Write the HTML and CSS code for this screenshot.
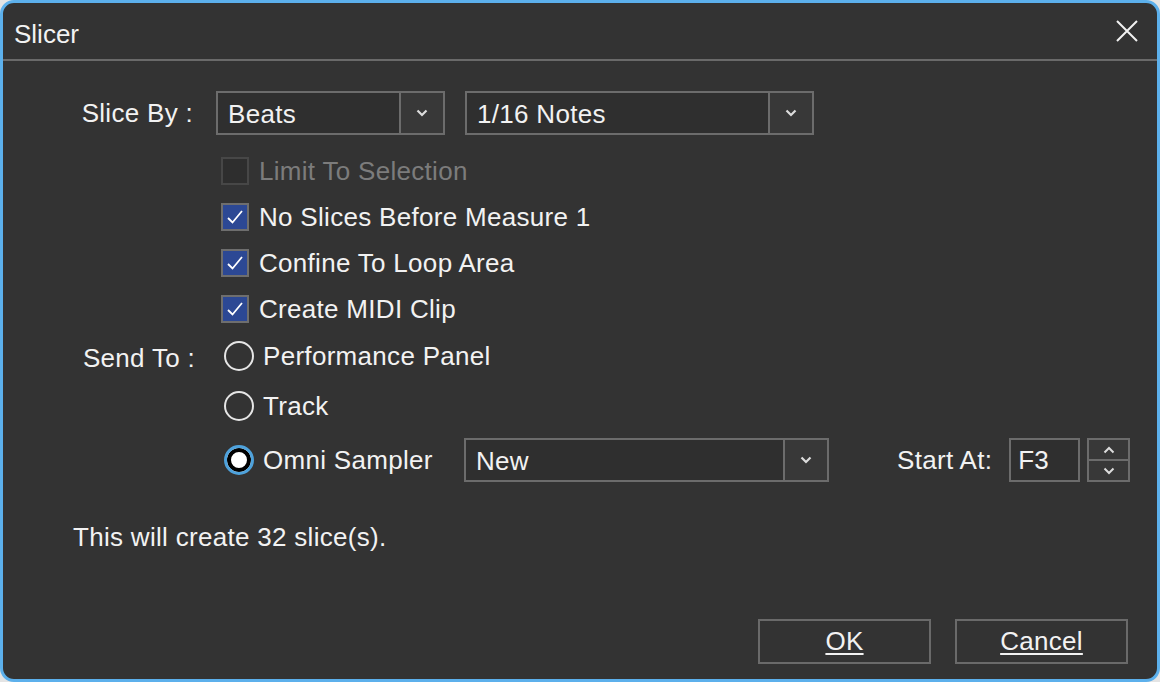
FILE: index.html
```html
<!DOCTYPE html>
<html lang="en">
<head>
    <meta charset="UTF-8">
    <title>Slicer</title>
    <link rel="stylesheet" href="styles.css">
</head>
<body>
    <div class="dialog">
        <header class="titlebar">
            <span class="title">Slicer</span>
            <button class="close" aria-label="Close">
                <svg width="24" height="24" viewBox="0 0 24 24"><path d="M2 2 L22 22 M22 2 L2 22" stroke="#f2f2f2" stroke-width="2" fill="none"/></svg>
            </button>
        </header>

        <main class="content">
            <div class="form">
                <div class="field-label slice-label">Slice By :</div>
                <div class="slice-controls">
                    <div class="dropdown beats">
                        <span class="dropdown-value">Beats</span>
                        <span class="dropdown-arrow">
                            <svg width="12" height="8" viewBox="0 0 12 8"><polyline points="1.5,1.5 6,6 10.5,1.5" stroke="#dcdcdc" stroke-width="2.2" fill="none"/></svg>
                        </span>
                    </div>
                    <div class="dropdown notes">
                        <span class="dropdown-value">1/16 Notes</span>
                        <span class="dropdown-arrow">
                            <svg width="12" height="8" viewBox="0 0 12 8"><polyline points="1.5,1.5 6,6 10.5,1.5" stroke="#dcdcdc" stroke-width="2.2" fill="none"/></svg>
                        </span>
                    </div>
                </div>

                <div></div>
                <div class="checks">
                    <div class="check-row disabled">
                        <span class="checkbox"></span>
                        <span>Limit To Selection</span>
                    </div>
                    <div class="check-row">
                        <span class="checkbox checked">
                            <svg width="18" height="16" viewBox="0 0 18 16"><polyline points="2,9 6.5,13.5 16,2" stroke="#fff" stroke-width="1.8" fill="none"/></svg>
                        </span>
                        <span>No Slices Before Measure 1</span>
                    </div>
                    <div class="check-row">
                        <span class="checkbox checked">
                            <svg width="18" height="16" viewBox="0 0 18 16"><polyline points="2,9 6.5,13.5 16,2" stroke="#fff" stroke-width="1.8" fill="none"/></svg>
                        </span>
                        <span>Confine To Loop Area</span>
                    </div>
                    <div class="check-row">
                        <span class="checkbox checked">
                            <svg width="18" height="16" viewBox="0 0 18 16"><polyline points="2,9 6.5,13.5 16,2" stroke="#fff" stroke-width="1.8" fill="none"/></svg>
                        </span>
                        <span>Create MIDI Clip</span>
                    </div>
                </div>

                <div class="field-label send-label">Send To :</div>
                <div class="radios">
                    <div class="radio-row">
                        <span class="radio"></span>
                        <span>Performance Panel</span>
                    </div>
                    <div class="radio-row track">
                        <span class="radio"></span>
                        <span>Track</span>
                    </div>
                    <div class="radio-row omni">
                        <div class="radio-option">
                            <span class="radio selected"></span>
                            <span>Omni Sampler</span>
                        </div>
                        <div class="dropdown sampler">
                            <span class="dropdown-value">New</span>
                            <span class="dropdown-arrow">
                                <svg width="12" height="8" viewBox="0 0 12 8"><polyline points="1.5,1.5 6,6 10.5,1.5" stroke="#dcdcdc" stroke-width="2.2" fill="none"/></svg>
                            </span>
                        </div>
                        <span class="start-label">Start At:</span>
                        <div class="start-field">F3</div>
                        <div class="spinner">
                            <span class="spin-btn">
                                <svg width="12" height="8" viewBox="0 0 12 8"><polyline points="1.5,6.5 6,2 10.5,6.5" stroke="#dcdcdc" stroke-width="2" fill="none"/></svg>
                            </span>
                            <span class="spin-btn">
                                <svg width="12" height="8" viewBox="0 0 12 8"><polyline points="1.5,1.5 6,6 10.5,1.5" stroke="#dcdcdc" stroke-width="2" fill="none"/></svg>
                            </span>
                        </div>
                    </div>
                </div>
            </div>

            <p class="summary">This will create 32 slice(s).</p>

            <footer class="buttons">
                <button class="btn"><u>OK</u></button>
                <button class="btn"><u>Cancel</u></button>
            </footer>
        </main>
    </div>
</body>
</html>
```

FILE: styles.css
```css
html, body {
    margin: 0;
    padding: 0;
    background-color: #e4e4e4;
}
body {
    font-family: "Liberation Sans", Arial, sans-serif;
    font-size: 26px;
    letter-spacing: 0.3px;
    color: #f2f2f2;
}
.dialog {
    box-sizing: border-box;
    width: 1160px;
    height: 682px;
    border: 3px solid #5cb0ec;
    border-radius: 14px;
    background-color: #333333;
    display: flex;
    flex-direction: column;
    overflow: hidden;
}

/* title bar */
.titlebar {
    height: 56px;
    border-bottom: 2px solid #6a6a6a;
    display: flex;
    align-items: center;
    justify-content: space-between;
    padding: 0 18px 0 11px;
}
.title {
    font-size: 26px;
    letter-spacing: 0;
    padding-top: 7px;
}
.close {
    background: none;
    border: none;
    padding: 0;
    display: flex;
}

/* main area */
.content {
    flex: 1;
    display: flex;
    flex-direction: column;
    padding: 30px 0 15px 0;
}
.form {
    display: grid;
    grid-template-columns: 192px 1fr;
    column-gap: 22px;
}
.field-label {
    text-align: right;
    white-space: nowrap;
}
.slice-label {
    line-height: 44px;
    margin-right: 2px;
}
.send-label {
    line-height: 48px;
    margin-top: 2px;
}

.slice-controls {
    display: flex;
    gap: 20px;
    margin-left: -1px;
}
.dropdown {
    box-sizing: border-box;
    height: 44px;
    border: 2px solid #6c6c6c;
    background-color: #2f2f2f;
    display: flex;
}
.dropdown-value {
    flex: 1;
    padding-left: 10px;
    line-height: 42px;
}
.dropdown-arrow {
    width: 42px;
    border-left: 2px solid #6c6c6c;
    background-color: #383838;
    display: flex;
    align-items: center;
    justify-content: center;
}
.dropdown.beats { width: 229px; }
.dropdown.notes { width: 349px; }
.dropdown.sampler { width: 365px; }

/* checkboxes */
.checks {
    margin-top: 13px;
}
.check-row {
    height: 46px;
    display: flex;
    align-items: center;
    padding-left: 4px;
    gap: 10px;
}
.checkbox {
    box-sizing: border-box;
    width: 28px;
    height: 28px;
    border: 2px solid #6e6e6e;
    display: flex;
    align-items: center;
    justify-content: center;
}
.checkbox.checked {
    background-color: #2c4894;
}
.check-row.disabled {
    color: #7c7c7c;
}
.check-row.disabled .checkbox {
    border-color: #474747;
    background-color: #2e2e2e;
}

/* radios */
.radio-row {
    height: 46px;
    display: flex;
    align-items: center;
    padding-left: 7px;
    gap: 9px;
}
.radio-row:first-child {
    margin-top: 1px;
}
.radio-row.track {
    margin-top: 4px;
}
.radio-row.omni {
    margin-top: 9px;
    height: 44px;
    gap: 0;
}
.radio-option {
    width: 240px;
    display: flex;
    align-items: center;
    gap: 9px;
}
.radio {
    box-sizing: border-box;
    width: 30px;
    height: 30px;
    border: 2px solid #e6e6e6;
    border-radius: 50%;
}
.radio.selected {
    border: 3px solid #4ea2dc;
    background-color: #fff;
    box-shadow: inset 0 0 0 4px #000;
}
.start-label {
    margin-left: 68px;
}
.start-field {
    box-sizing: border-box;
    width: 71px;
    height: 44px;
    margin-left: 17px;
    border: 2px solid #6c6c6c;
    background-color: #2f2f2f;
    padding-left: 7px;
    line-height: 40px;
}
.spinner {
    box-sizing: border-box;
    width: 43px;
    height: 44px;
    margin-left: 7px;
    border: 2px solid #6c6c6c;
    background-color: #383838;
    display: flex;
    flex-direction: column;
}
.spin-btn {
    flex: 1;
    display: flex;
    align-items: center;
    justify-content: center;
}
.spin-btn + .spin-btn {
    border-top: 2px solid #6c6c6c;
}

.summary {
    margin: 40px 0 0 70px;
    line-height: 30px;
}

/* buttons */
.buttons {
    margin-top: auto;
    display: flex;
    justify-content: flex-end;
    gap: 24px;
    padding-right: 29px;
}
.btn {
    box-sizing: border-box;
    width: 173px;
    height: 45px;
    border: 2px solid #6a6a6a;
    background-color: #333333;
    color: #f2f2f2;
    font-family: inherit;
    font-size: 26px;
    letter-spacing: 0.3px;
    padding: 0;
}
.btn u {
    text-underline-offset: 3px;
}
```
